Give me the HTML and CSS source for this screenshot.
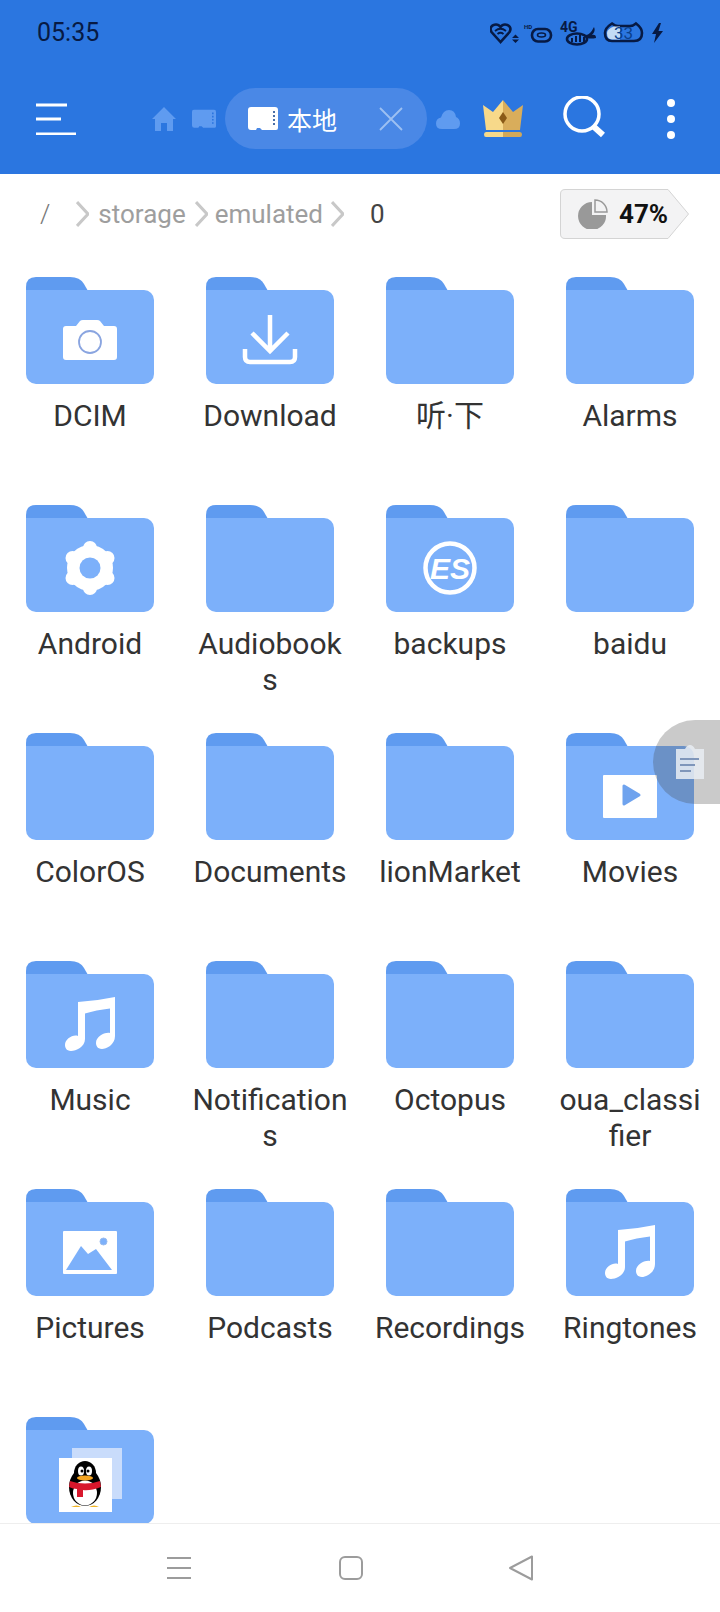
FILE: index.html
```html
<!DOCTYPE html>
<html lang="en">
<head>
    <meta charset="UTF-8">
    <meta name="viewport" content="width=device-width, initial-scale=1.0">
    <title>本地</title>
    <link rel="stylesheet" href="styles.css">
</head>
<body>
    <svg class="defs" width="0" height="0">
        <symbol id="folder" viewBox="0 0 128 107">
            <path fill="#5f9bf0" d="M0 14V10Q0 0 10 0H44Q54 0 58 7L62 14Z"/>
            <path fill="#7cb0fa" d="M0 13H118A10 10 0 0 1 128 23V97A10 10 0 0 1 118 107H10A10 10 0 0 1 0 97Z"/>
        </symbol>
        <symbol id="note" viewBox="0 0 128 107">
            <path fill="#fff" d="M52 41Q70 40 89 36V75C89 84 80 88 76 88C71 88 70 84 70 82C70 76 78 71 84 72V47.500Q70 49 59 52.500V78C59 86 50 90 45 90C40 90 39 86 39 84C39 78 47 73 52 75Z"/>
        </symbol>
        <symbol id="sd" viewBox="0 0 30 24">
            <path d="M3 0H27Q30 0 30 3V21Q30 23 28 23H14L12 21H9L8 23H3Q0 23 0 20V3Q0 0 3 0Z"/>
        </symbol>
    </svg>

    <div class="page">
        <header class="top">
            <div class="status">
                <span class="time">05:35</span>
                <svg class="status-icons" width="175" height="36" viewBox="490 10 175 36">
                    <g fill="none" stroke="#071a44" stroke-width="2.600">
                        <path d="M500.500 41L491.500 31C489 27 492 23.500 496 23.500C498 23.500 499.500 24.500 500.500 26C501.500 24.500 503 23.500 505 23.500C509 23.500 512 27 509.500 31Z"/>
                        <path stroke-width="1.800" d="M495 30Q500.500 25.500 506 30M497.500 33Q500.500 30.500 503.500 33"/>
                        <rect x="532" y="28" width="19" height="12.500" rx="6"/>
                        <ellipse cx="541.500" cy="34" rx="4" ry="2" stroke-width="1.600"/>
                        <ellipse cx="577" cy="38" rx="10" ry="5.500"/>
                        <path stroke-width="2" d="M572 41V37M576 41V35M580 41V34M584 41V36"/>
                        <path d="M612 22.500Q615 25 618 25H630Q633 25 636 22.500Q642 27 642 32Q642 40 634 40H612Q605 40 605 32Q605 27 612 22.500Z"/>
                    </g>
                    <path fill="#071a44" d="M512 37L515.500 33.500L519 37ZM512 38.500L515.500 42L519 38.500ZM659 22L652 33H656L654 42L663 30H658.500L661 22ZM586 34Q590 34 594 26Q596 30 592 34Q596 33 596 37Q591 38 587 37Z"/>
                    <path fill="#c3dcf5" d="M614 25.500H620V38.500H612Q607 38.500 607 32Q607 28 614 25.500Z"/>
                    <text class="stat-hd" x="524" y="27.500">HD</text>
                    <text class="stat-4g" x="560" y="31">4G</text>
                    <text class="stat-bat" x="614" y="38">33</text>
                </svg>
            </div>
            <div class="toolbar">
                <svg class="menu" width="40" height="32" viewBox="0 0 40 32">
                    <path stroke="#fff" stroke-width="3" d="M0 2H31M0 16H25M0 31H40"/>
                </svg>
                <svg class="home" width="24" height="24" viewBox="0 0 24 24">
                    <path fill="#5f9bf0" d="M12 0L24 12H21V24H15V16H9V24H3V12H0Z"/>
                </svg>
                <svg class="tab-sd" width="24" height="20" viewBox="0 0 30 24" fill="#5f9bf0">
                    <use href="#sd"/>
                    <path stroke="#2b76e0" stroke-width="2" stroke-dasharray="2 2" d="M26 4V19"/>
                </svg>
                <div class="pill">
                    <svg class="pill-sd" width="30" height="24" viewBox="0 0 30 24" fill="#fff">
                        <use href="#sd"/>
                        <path stroke="#4a6fa8" stroke-width="2" stroke-dasharray="2 2" d="M26 4V19"/>
                    </svg>
                    <span class="pill-text">本地</span>
                    <svg class="pill-x" width="24" height="24" viewBox="0 0 24 24">
                        <path stroke="#9dc0f2" stroke-width="1.800" d="M1 1L23 23M23 1L1 23"/>
                    </svg>
                </div>
                <svg class="cloud" width="24" height="20" viewBox="0 0 24 20">
                    <path fill="#5f9bf0" d="M6 20Q0 20 0 14.500Q0 9.500 5 8.500Q7 1 13 1Q19 1 20 8Q24 9.500 24 14.500Q24 20 18 20Z"/>
                </svg>
                <svg class="crown" width="40" height="38" viewBox="0 0 40 38">
                    <path fill="#f7d98a" d="M0 5L10 12L20 0V30H3Z"/>
                    <path fill="#d9ad5b" d="M40 5L30 12L20 0V30H37Z"/>
                    <path fill="#8a5a17" d="M20 12L24 18L20 24L16 18Z"/>
                    <path fill="#f7d98a" d="M3 32H20V37H3Q1 37 1 34.500Q1 32 3 32Z"/>
                    <path fill="#d2a858" d="M20 32H37Q39 32 39 34.500Q39 37 37 37H20Z"/>
                </svg>
                <svg class="search" width="42" height="42" viewBox="0 0 42 42">
                    <circle cx="19" cy="18" r="17" fill="none" stroke="#fff" stroke-width="3.500"/>
                    <path stroke="#fff" stroke-width="6" d="M30 30L40 39"/>
                </svg>
                <div class="dots"><i></i><i></i><i></i></div>
            </div>
        </header>

        <div class="crumbs">
            <span class="crumb-root">/</span>
            <svg class="chev chev-first" width="13" height="26" viewBox="0 0 13 26"><path d="M1 1L12 13L1 25"/></svg>
            <span class="crumb">storage</span>
            <svg class="chev" width="13" height="26" viewBox="0 0 13 26"><path d="M1 1L12 13L1 25"/></svg>
            <span class="crumb crumb-tight">emulated</span>
            <svg class="chev" width="13" height="26" viewBox="0 0 13 26"><path d="M1 1L12 13L1 25"/></svg>
            <span class="crumb-now">0</span>
            <div class="usage">
                <svg class="usage-bg" width="129" height="50" viewBox="0 0 129 50">
                    <path fill="#f3f3f4" stroke="#d4d4d4" d="M5 .5H108L128.500 25L108 49.500H5Q.5 49.500 .5 45V5Q.5 .5 5 .5Z"/>
                </svg>
                <svg class="pie" width="30" height="30" viewBox="0 0 30 30">
                    <path fill="#999" d="M14 3A14 14 0 1 0 28 16H14Z"/>
                    <path fill="#f3f3f4" stroke="#999" stroke-width="1.500" d="M17 1A12 12 0 0 1 29 13H17Z"/>
                </svg>
                <span class="usage-text">47%</span>
            </div>
        </div>

        <main class="files">
            <div class="grid">
                <div class="item">
                    <svg class="icon" viewBox="0 0 128 107"><use href="#folder"/>
                        <path fill="#fff" d="M40 49H50L54 44Q55 43 57 43H71Q73 43 74 44L78 49H88Q91 49 91 52V80Q91 83 88 83H40Q37 83 37 80V52Q37 49 40 49Z"/>
                        <circle cx="64" cy="65" r="11" fill="#fff" stroke="#8aa5e0" stroke-width="1.800"/>
                    </svg>
                    <div class="name">DCIM</div>
                </div>
                <div class="item">
                    <svg class="icon" viewBox="0 0 128 107"><use href="#folder"/>
                        <g fill="none" stroke="#fff" stroke-width="4.500">
                            <path d="M64 38V74M46 56L64 74L82 56"/>
                            <path d="M39 72V80Q39 85 44 85H84Q89 85 89 80V72"/>
                        </g>
                    </svg>
                    <div class="name">Download</div>
                </div>
                <div class="item">
                    <svg class="icon" viewBox="0 0 128 107"><use href="#folder"/></svg>
                    <div class="name">听·下</div>
                </div>
                <div class="item">
                    <svg class="icon" viewBox="0 0 128 107"><use href="#folder"/></svg>
                    <div class="name">Alarms</div>
                </div>

                <div class="item">
                    <svg class="icon" viewBox="0 0 128 107"><use href="#folder"/>
                        <g fill="#fff">
                            <circle cx="64" cy="63" r="23"/>
                            <circle cx="64" cy="43" r="7"/>
                            <circle cx="64" cy="83" r="7"/>
                            <circle cx="46.500" cy="53" r="7"/>
                            <circle cx="81.500" cy="53" r="7"/>
                            <circle cx="46.500" cy="73" r="7"/>
                            <circle cx="81.500" cy="73" r="7"/>
                        </g>
                        <circle cx="64" cy="63" r="10.500" fill="#7cb0fa"/>
                    </svg>
                    <div class="name">Android</div>
                </div>
                <div class="item">
                    <svg class="icon" viewBox="0 0 128 107"><use href="#folder"/></svg>
                    <div class="name">Audiobooks</div>
                </div>
                <div class="item">
                    <svg class="icon" viewBox="0 0 128 107"><use href="#folder"/>
                        <circle cx="64" cy="63" r="24.500" fill="none" stroke="#fff" stroke-width="4.500"/>
                        <text class="es" x="64" y="74">ES</text>
                    </svg>
                    <div class="name">backups</div>
                </div>
                <div class="item">
                    <svg class="icon" viewBox="0 0 128 107"><use href="#folder"/></svg>
                    <div class="name">baidu</div>
                </div>

                <div class="item">
                    <svg class="icon" viewBox="0 0 128 107"><use href="#folder"/></svg>
                    <div class="name">ColorOS</div>
                </div>
                <div class="item">
                    <svg class="icon" viewBox="0 0 128 107"><use href="#folder"/></svg>
                    <div class="name">Documents</div>
                </div>
                <div class="item">
                    <svg class="icon" viewBox="0 0 128 107"><use href="#folder"/></svg>
                    <div class="name">lionMarket</div>
                </div>
                <div class="item">
                    <svg class="icon" viewBox="0 0 128 107"><use href="#folder"/>
                        <rect x="37" y="42" width="54" height="43" rx="1" fill="#fff"/>
                        <path fill="#6fa3ee" stroke="#6fa3ee" stroke-width="3" stroke-linejoin="round" d="M58 53V71L73 62Z"/>
                    </svg>
                    <div class="name">Movies</div>
                </div>

                <div class="item">
                    <svg class="icon" viewBox="0 0 128 107"><use href="#folder"/><use href="#note"/></svg>
                    <div class="name">Music</div>
                </div>
                <div class="item">
                    <svg class="icon" viewBox="0 0 128 107"><use href="#folder"/></svg>
                    <div class="name">Notifications</div>
                </div>
                <div class="item">
                    <svg class="icon" viewBox="0 0 128 107"><use href="#folder"/></svg>
                    <div class="name">Octopus</div>
                </div>
                <div class="item">
                    <svg class="icon" viewBox="0 0 128 107"><use href="#folder"/></svg>
                    <div class="name">oua_classi<br>fier</div>
                </div>

                <div class="item">
                    <svg class="icon" viewBox="0 0 128 107"><use href="#folder"/>
                        <rect x="37" y="42" width="54" height="43" rx="1" fill="#fff"/>
                        <circle cx="77.500" cy="52.500" r="3.500" fill="#7cb0fa" stroke="#9abcef"/>
                        <path fill="#7cb0fa" d="M40 81L55 57L62 65L70 60L86 81Z"/>
                    </svg>
                    <div class="name">Pictures</div>
                </div>
                <div class="item">
                    <svg class="icon" viewBox="0 0 128 107"><use href="#folder"/></svg>
                    <div class="name">Podcasts</div>
                </div>
                <div class="item">
                    <svg class="icon" viewBox="0 0 128 107"><use href="#folder"/></svg>
                    <div class="name">Recordings</div>
                </div>
                <div class="item">
                    <svg class="icon" viewBox="0 0 128 107"><use href="#folder"/><use href="#note"/></svg>
                    <div class="name">Ringtones</div>
                </div>

                <div class="item">
                    <svg class="icon" viewBox="0 0 128 107"><use href="#folder"/>
                        <rect x="46" y="31" width="50" height="51" fill="#c9dcfb"/>
                        <rect x="33" y="41" width="53" height="54" fill="#fff"/>
                        <ellipse cx="59" cy="70" rx="16" ry="19" fill="#000"/>
                        <ellipse cx="59" cy="56" rx="11" ry="12" fill="#000"/>
                        <ellipse cx="59" cy="76" rx="12" ry="12.500" fill="#fff"/>
                        <ellipse cx="55" cy="54" rx="3" ry="4.500" fill="#fff"/>
                        <ellipse cx="63" cy="54" rx="3" ry="4.500" fill="#fff"/>
                        <circle cx="56" cy="54" r="1.500" fill="#000"/>
                        <circle cx="62" cy="54" r="1.500" fill="#000"/>
                        <ellipse cx="59" cy="61" rx="8" ry="2.500" fill="#f5a623"/>
                        <path fill="#d8172c" d="M44 64Q59 69 74 64L75 70Q64 74 57 73V80H51V72Q47 72 43 70Z"/>
                        <path fill="#f0b323" d="M45 90Q51 87 55 90ZM63 90Q68 87 73 90Z"/>
                    </svg>
                </div>
            </div>
        </main>

        <div class="float-tool">
            <svg width="28" height="36" viewBox="0 0 28 36">
                <path fill="#e9edf3" fill-opacity=".85" d="M0 4H9Q11 0 14 0Q17 0 19 4H28V34H0Z"/>
                <path stroke="#7f96ba" stroke-width="2" d="M4 14H23M4 20H19M4 26H15"/>
            </svg>
        </div>

        <footer class="nav">
            <svg width="24" height="24" viewBox="0 0 24 24">
                <path stroke="#9c9c9c" stroke-width="2" d="M0 2H24M0 12H24M0 22H24"/>
            </svg>
            <svg width="24" height="24" viewBox="0 0 24 24">
                <rect x="1" y="1" width="22" height="22" rx="5" fill="none" stroke="#9c9c9c" stroke-width="2"/>
            </svg>
            <svg class="nav-back" width="24" height="26" viewBox="0 0 24 26">
                <path fill="none" stroke="#9c9c9c" stroke-width="2" stroke-linejoin="round" d="M23 1.500V24.500L1 13Z"/>
            </svg>
        </footer>
    </div>
</body>
</html>
```

FILE: styles.css
```css
* {
    box-sizing: border-box;
}
html, body {
    margin: 0;
    padding: 0;
}
body {
    font-family: Roboto, "Noto Sans CJK SC", sans-serif;
    color: #333;
    background: #fff;
}
svg {
    display: block;
    flex: none;
}
.defs {
    position: absolute;
}
.page {
    position: relative;
    width: 720px;
    height: 1612px;
    display: flex;
    flex-direction: column;
    overflow: hidden;
}

/* header */
.top {
    background-color: #2b76e0;
    height: 174px;
}
.status {
    height: 60px;
    display: flex;
    align-items: center;
    padding: 4px 0 0 37px;
}
.time {
    font-size: 25px;
    color: #071a44;
}
.status-icons {
    margin-left: auto;
    margin-right: 55px;
    margin-top: -7px;
}
.stat-hd {
    font: bold 6px Roboto, sans-serif;
    fill: #071a44;
}
.stat-4g {
    font: bold 14px "Roboto", sans-serif;
    fill: #071a44;
}
.stat-bat {
    font: 17px Roboto, sans-serif;
    fill: #0a3f8c;
}
.toolbar {
    height: 114px;
    padding: 3px 0 0 36px;
    display: flex;
    align-items: center;
}
.home {
    margin-left: 76px;
}
.tab-sd {
    margin-left: 16px;
}
.pill {
    width: 202px;
    height: 61px;
    margin-left: 9px;
    padding: 0 24px 0 23px;
    border-radius: 31px;
    background-color: #4a88e6;
    display: flex;
    align-items: center;
}
.pill-text {
    margin-left: 9px;
    font-size: 25px;
    color: #fff;
}
.pill-x {
    margin-left: auto;
}
.cloud {
    margin-left: 9px;
}
.crown {
    margin-left: 23px;
}
.search {
    margin-left: 40px;
    margin-top: -3px;
}
.dots {
    margin-left: 62px;
    display: flex;
    flex-direction: column;
    gap: 8px;
}
.dots i {
    width: 8px;
    height: 8px;
    border-radius: 50%;
    background-color: #fff;
}

/* breadcrumb */
.crumbs {
    height: 80px;
    padding: 0 31px 0 40px;
    display: flex;
    align-items: center;
    font-size: 26px;
}
.crumb-root {
    color: #777;
    font-weight: 300;
}
.crumb {
    color: #9e9e9e;
    margin: 0 9px;
}
.crumb-tight {
    margin: 0 8px 0 7px;
}
.crumb-now {
    color: #444;
    margin-left: 26px;
}
.chev path {
    fill: none;
    stroke: #c8c8c8;
    stroke-width: 3;
}
.chev-first {
    margin-left: 26px;
}
.usage {
    position: relative;
    width: 129px;
    height: 50px;
    margin-left: auto;
    padding-left: 18px;
    display: flex;
    align-items: center;
}
.usage-bg {
    position: absolute;
    left: 0;
    top: 0;
}
.pie {
    position: relative;
}
.usage-text {
    position: relative;
    margin-left: 11px;
    font-size: 26px;
    font-weight: 700;
    color: #111;
}

/* folders */
.files {
    flex: 1;
    min-height: 0;
    overflow: hidden;
    padding-top: 23px;
}
.grid {
    display: grid;
    grid-template-columns: repeat(4, 180px);
    grid-auto-rows: 228px;
}
.item {
    display: flex;
    flex-direction: column;
    align-items: center;
}
.icon {
    width: 128px;
    height: 107px;
}
.name {
    width: 156px;
    margin-top: 14px;
    font-size: 30px;
    line-height: 36px;
    text-align: center;
    word-break: break-all;
}
.es {
    font: italic 900 30px "Liberation Sans", sans-serif;
    fill: #fff;
    text-anchor: middle;
}

/* floating clipboard */
.float-tool {
    position: absolute;
    right: 0;
    top: 720px;
    width: 67px;
    height: 84px;
    padding: 25px 0 0 23px;
    border-radius: 42px 0 0 42px;
    background-color: rgba(64, 64, 64, 0.28);
}

/* bottom nav */
.nav {
    height: 89px;
    padding-left: 167px;
    border-top: 1px solid #eee;
    background-color: #fff;
    display: flex;
    align-items: center;
    gap: 148px;
}
.nav-back {
    margin-left: -2px;
}
```
